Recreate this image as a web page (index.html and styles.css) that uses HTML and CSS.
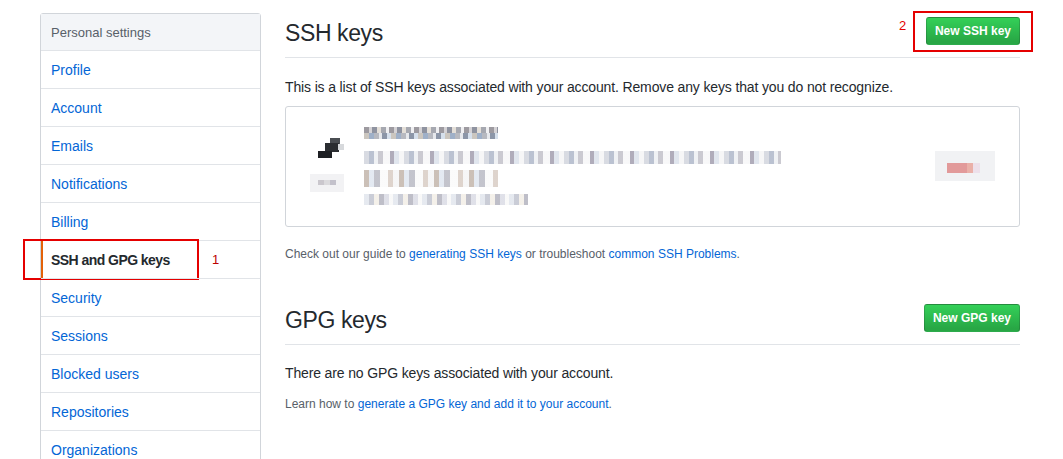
FILE: index.html
```html
<!DOCTYPE html>
<html>
<head>
<meta charset="utf-8">
<link rel="stylesheet" href="styles.css">
</head>
<body>
<div class="page">
  <nav class="sidebar">
    <div class="menu">
      <div class="menu-head">Personal settings</div>
      <a class="menu-item">Profile</a>
      <a class="menu-item">Account</a>
      <a class="menu-item">Emails</a>
      <a class="menu-item">Notifications</a>
      <a class="menu-item">Billing</a>
      <a class="menu-item selected">SSH and GPG keys
        <span class="mark mark-1"></span><span class="num num-1">1</span></a>
      <a class="menu-item">Security</a>
      <a class="menu-item">Sessions</a>
      <a class="menu-item">Blocked users</a>
      <a class="menu-item">Repositories</a>
      <a class="menu-item">Organizations</a>
    </div>
  </nav>
  <main class="main">
    <div class="subhead">
      <h2 class="subhead-title">SSH keys</h2>
      <div class="btn-wrap">
        <span class="num num-2">2</span>
        <span class="mark mark-2"></span>
        <button class="btn">New SSH key</button>
      </div>
    </div>
    <p class="lead">This is a list of SSH keys associated with your account. Remove any keys that you do not recognize.</p>
    <div class="keybox">
      <div class="key-icon">
        <div class="glyph">
          <span class="g g1"></span><span class="g g2"></span><span class="g g3"></span><span class="g g4"></span>
        </div>
        <div class="badge"></div>
      </div>
      <div class="key-lines">
        <div class="bl bl1"></div>
        <div class="bl bl2"></div>
        <div class="bl bl3"></div>
        <div class="bl bl4"></div>
      </div>
      <div class="key-del"><span class="del-red"></span></div>
    </div>
    <p class="note">Check out our guide to <a>generating SSH keys</a> or troubleshoot <a>common SSH Problems</a>.</p>

    <div class="subhead gpg">
      <h2 class="subhead-title">GPG keys</h2>
      <div class="btn-wrap">
        <button class="btn">New GPG key</button>
      </div>
    </div>
    <p class="empty">There are no GPG keys associated with your account.</p>
    <p class="note learn">Learn how to <a>generate a GPG key and add it to your account</a>.</p>
  </main>
</div>
</body>
</html>
```

FILE: styles.css
```css
* { box-sizing: border-box; }
html, body { margin: 0; padding: 0; background: #fff; }
body {
  font-family: "Liberation Sans", Arial, sans-serif;
  font-size: 14px;
  color: #24292e;
  overflow: hidden;
}
a { color: #0366d6; text-decoration: none; }

.page {
  display: flex;
  gap: 24px;
  padding: 13px 0 0 40px;
  width: 1063px;
  height: 459px;
}

.sidebar { width: 221px; flex: none; }
.menu {
  border: 1px solid #d1d5da;
  border-radius: 3px 3px 0 0;
  background: #fff;
}
.menu-head {
  height: 36px;
  line-height: 37px;
  padding-left: 10px;
  background: #f3f5f8;
  color: #586069;
  font-size: 13px;
}
.menu-item {
  display: block;
  position: relative;
  height: 38px;
  line-height: 38px;
  padding-left: 10px;
  border-top: 1px solid #e1e4e8;
  color: #0366d6;
}
.menu-item.selected {
  color: #24292e;
  font-weight: bold;
  letter-spacing: -0.55px;
  border-left: 2px solid #e36209;
  padding-left: 8px;
}

.mark {
  position: absolute;
  border: 2px solid #e50000;
  pointer-events: none;
}
.mark-1 { left: -20px; top: -2px; width: 176px; height: 41px; }
.num {
  position: absolute;
  color: #e50000;
  font-weight: normal;
  font-size: 13px;
  letter-spacing: 0;
}
.num-1 { left: 169px; top: 0; color: #b00; }

.main { width: 735px; flex: none; }

.subhead {
  display: flex;
  align-items: flex-start;
  justify-content: space-between;
  height: 45px;
  border-bottom: 1px solid #e1e4e8;
}
.subhead-title {
  margin: 0;
  padding-top: 6px;
  font-size: 23px;
  line-height: 28px;
  font-weight: normal;
  letter-spacing: -0.4px;
  color: #24292e;
}
.btn-wrap { position: relative; display: flex; margin-top: 4px; }
.num-2 { left: -27px; top: 1px; line-height: 15px; }
.mark-2 { left: -13px; top: -6px; width: 120px; height: 41px; }

.btn {
  height: 28px;
  padding: 0 8px;
  font-family: inherit;
  font-size: 12px;
  font-weight: bold;
  color: #fff;
  background: linear-gradient(#34d058, #28a745 90%);
  border: 1px solid rgba(27,31,35,0.2);
  border-radius: 3px;
}

.lead { margin: 20px 0 10px; line-height: 18px; letter-spacing: -0.14px; }

.keybox {
  height: 121px;
  border: 1px solid #d1d5da;
  border-radius: 3px;
  display: flex;
  align-items: flex-start;
  padding: 18px 0 0 24px;
}
.key-icon { width: 54px; flex: none; padding-top: 13px; }
.glyph { position: relative; width: 30px; height: 26px; margin-left: 8px; }
.g { position: absolute; background: #2b2d31; }
.g1 { left: 12px; top: 0; width: 10px; height: 6px; background: #4a4d52; }
.g2 { left: 7px; top: 5px; width: 14px; height: 9px; }
.g3 { left: 0; top: 13px; width: 14px; height: 7px; background: #1e2024; }
.g4 { top: 6px; width: 6px; height: 6px; background: #d7d9dc; left: 20px; }
.badge {
  margin-top: 10px;
  width: 34px;
  height: 18px;
  background:
    linear-gradient(90deg, transparent 0 8px, #c5c2c8 8px 14px, #d8d6da 14px 20px, #bdbbc6 20px 26px, transparent 26px) 0 6px / 100% 5px no-repeat,
    #f1f1f3;
  opacity: 0.9;
}
.key-lines { width: 420px; flex: none; padding-top: 2px; }
.bl { height: 12px; margin-bottom: 8px; }
.bl1 {
  width: 134px; height: 14px; margin-bottom: 10px;
  background:
    repeating-linear-gradient(90deg, #9d9aa0 0 5px, #d5d3d6 5px 8px, #8f93a0 8px 13px, #e4dfd8 13px 17px, #a6a8b0 17px 22px, #f0f0f2 22px 25px) 0 0 / 100% 6px no-repeat,
    repeating-linear-gradient(90deg, #cbc6bf 0 5px, #9fb0c8 5px 10px, #b7b9c0 10px 15px, #e6e8ec 15px 18px, #8c96a8 18px 23px, #d6e0ec 23px 27px) 0 6px / 100% 6px no-repeat;
}
.bl2 {
  width: 417px; height: 13px; margin-bottom: 6px;
  background: repeating-linear-gradient(90deg, #d4d7df 0 5px, #b3bbcc 5px 10px, #eef0f3 10px 14px, #c5c4cc 14px 19px, #f7f7f8 19px 26px, #a7a3b3 26px 30px, #dde3ec 30px 35px, #f5f5f6 35px 40px);
  opacity: 0.9;
}
.bl3 {
  width: 134px; height: 17px; margin-bottom: 7px;
  background: repeating-linear-gradient(90deg, #c2b5ab 0 5px, #dfe6f0 5px 10px, #b9bac4 10px 16px, #fafafa 16px 24px, #d8ccc4 24px 29px, #f4f4f5 29px 35px);
  opacity: 0.85;
}
.bl4 {
  width: 164px; height: 11px;
  background: repeating-linear-gradient(90deg, #e3e7ee 0 5px, #c4c7d2 5px 10px, #f3efe8 10px 15px, #b7b7c2 15px 20px, #dcdde6 20px 25px, #f8f8f8 25px 29px);
  opacity: 0.9;
}
.key-del {
  margin-left: auto;
  margin-right: 24px;
  margin-top: 26px;
  width: 60px;
  height: 30px;
  background: #f1f2f4;
  position: relative;
}
.del-red {
  position: absolute;
  left: 12px; top: 12px;
  width: 33px; height: 10px;
  background: linear-gradient(90deg, #e29a9a 0 20px, #eab0a8 20px 26px, #ede0ea 26px);
}

.note { margin: 19px 0 0; font-size: 12px; line-height: 17px; color: #586069; }
.note a { color: #0366d6; }

.gpg { margin-top: 37px; }
.empty { margin: 19px 0 0; line-height: 18px; letter-spacing: -0.14px; }
.learn { margin-top: 14px; }
```
